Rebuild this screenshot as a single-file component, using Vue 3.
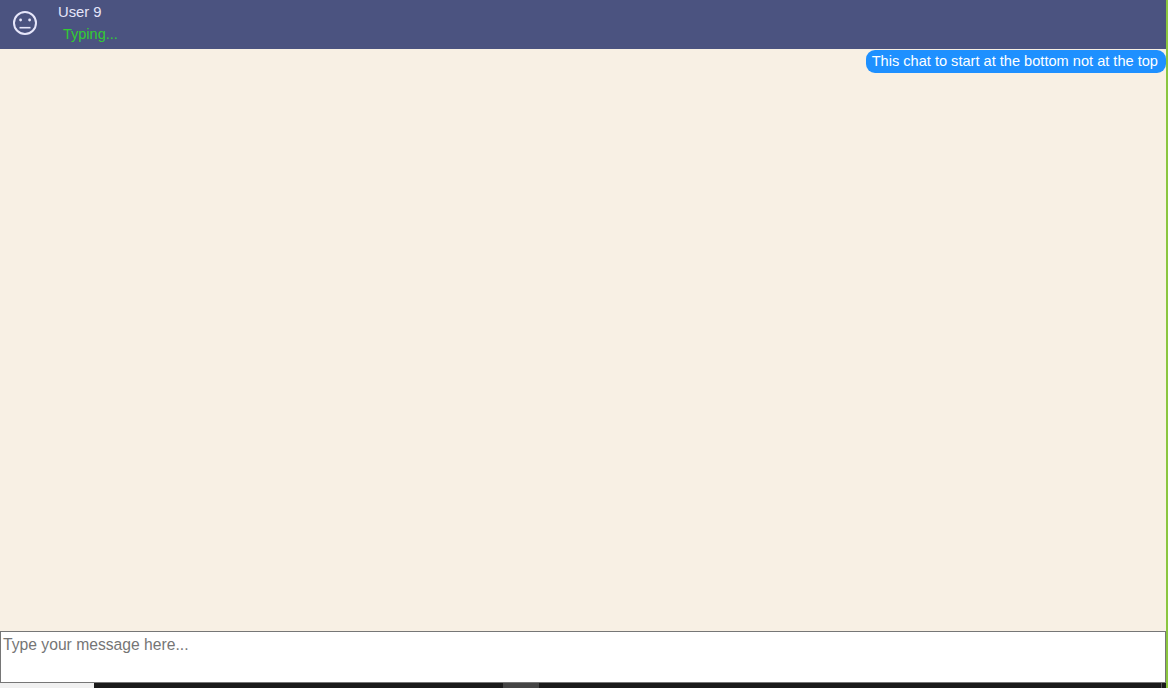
<script setup>
const message = 'This chat to start at the bottom not at the top'
</script>

<template>
  <div class="page">
    <div class="chat">
      <header class="head">
        <svg class="face" width="26" height="26" viewBox="0 0 26 26" fill="none" stroke="#e6e6fa" stroke-width="2">
          <circle cx="13" cy="13" r="11" />
          <circle cx="8.6" cy="10" r="1.4" fill="#e6e6fa" stroke="none" />
          <circle cx="17.6" cy="10" r="1.4" fill="#e6e6fa" stroke="none" />
          <path d="M7.5 17.7h11" stroke-width="1.6" />
        </svg>
        <div class="who">
          <div class="name">User 9</div>
          <div class="status">Typing...</div>
        </div>
      </header>
      <main class="messages">
        <div class="bubble">{{ message }}</div>
      </main>
      <textarea class="input" placeholder="Type your message here..."></textarea>
      <div class="under">
        <div class="under-light"></div>
        <div class="under-dark"></div>
        <div class="under-mid"></div>
        <div class="under-dark grow"></div>
        <div class="under-tick"></div>
        <div class="under-end"></div>
      </div>
    </div>
    <div class="edge"></div>
  </div>
</template>

<style>
html, body { margin: 0; overflow: hidden; }
</style>

<style scoped>
.page {
  display: flex;
  width: 1168px;
  height: 688px;
  font-family: "Liberation Sans", Arial, sans-serif;
}
.chat {
  display: flex;
  flex-direction: column;
  width: 1166px;
  height: 688px;
}
.edge { width: 2px; background: #8bc63f; }
.head {
  display: flex;
  flex: none;
  align-items: center;
  height: 49px;
  padding-left: 12px;
  box-sizing: border-box;
  background: #4b5380;
}
.face { flex: none; margin-bottom: 3px; }
.who { margin-left: 20px; margin-top: -2px; }
.name {
  color: #e6e6fa;
  font-size: 14.8px;
  line-height: 16px;
  margin-top: -1px;
}
.status {
  color: #32cd32;
  font-size: 14.5px;
  line-height: 16px;
  margin: 6px 0 0 5px;
}
.messages {
  display: flex;
  flex: 1;
  flex-direction: column;
  align-items: flex-end;
  padding-top: 1px;
  background: #f8f0e4;
}
.bubble {
  padding: 0 8px 0 6px;
  height: 23px;
  line-height: 23px;
  border-radius: 9px;
  background: #1e90ff;
  color: #fff;
  font-size: 14.6px;
  white-space: nowrap;
}
.input {
  display: block;
  flex: none;
  width: 1166px;
  height: 52px;
  margin: 0;
  padding: 3px 2px;
  box-sizing: border-box;
  border: 1px solid #767676;
  border-radius: 0;
  outline: none;
  resize: none;
  background: #fff;
  font-family: "Liberation Sans", Arial, sans-serif;
  font-size: 15.68px;
  line-height: 20px;
}
.input::placeholder { color: #757575; opacity: 1; }
.under { display: flex; flex: none; height: 5px; }
.under-light { width: 94px; background: #f0f0f0; }
.under-dark { width: 409px; background: #1a1a1a; }
.under-mid { width: 36px; background: #444; }
.grow { flex: 1; }
.under-tick { width: 1px; background: #555; }
.under-end { width: 4px; background: #1a1a1a; }
</style>
